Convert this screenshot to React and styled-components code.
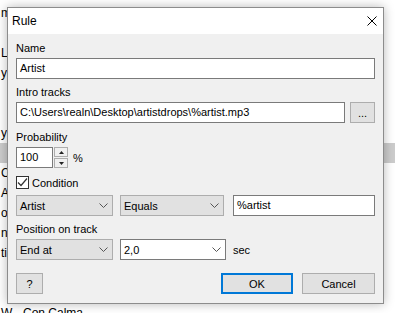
import React from 'react';
import styled, { createGlobalStyle } from 'styled-components';

const GlobalStyle = createGlobalStyle`
  body {
    margin: 0;
    background: #ffffff;
    font-family: "Liberation Sans", Arial, sans-serif;
    font-size: 11px;
    color: #000;
  }
`;

const Screen = styled.div`
  position: relative;
  width: 395px;
  height: 313px;
  overflow: hidden;
  background: #fff;
`;

const List = styled.div`
  display: flex;
  flex-direction: column;
  padding-top: 3px;
`;

const ListRow = styled.div`
  height: 20px;
  line-height: 20px;
  flex: none;
  white-space: nowrap;
  padding-left: 1px;
  font-size: 12px;
  background: ${(p) => (p.selected ? '#cccccc' : 'transparent')};
`;

const Dialog = styled.div`
  position: absolute;
  left: 7px;
  top: 7px;
  width: 377px;
  height: 297px;
  box-sizing: border-box;
  border: 1px solid #8c8c8c;
  background: #f0f0f0;
  box-shadow: 0 0 10px rgba(0, 0, 0, 0.28);
  display: flex;
  flex-direction: column;
`;

const TitleBar = styled.div`
  height: 26px;
  flex: none;
  background: #fff;
  display: flex;
  align-items: center;
  justify-content: space-between;
  padding: 0 6px 0 4px;
`;

const Title = styled.span`
  font-size: 12px;
`;

const Body = styled.div`
  flex: 1;
  display: flex;
  flex-direction: column;
  padding: 6px 8px 9px 8px;
`;

const Label = styled.div`
  height: 16px;
  line-height: 16px;
  margin-top: ${(p) => p.mt || 0}px;
  margin-bottom: 2px;
`;

const Row = styled.div`
  display: flex;
  align-items: center;
  gap: ${(p) => p.gap || 0}px;
  margin-top: ${(p) => p.mt || 0}px;
`;

const TextBox = styled.div`
  box-sizing: border-box;
  height: 21px;
  width: ${(p) => (p.w ? `${p.w}px` : 'auto')};
  flex: ${(p) => (p.grow ? 1 : 'none')};
  margin-left: ${(p) => p.ml || 0}px;
  border: 1px solid #7a7a7a;
  background: #fff;
  padding: 0 3px;
  line-height: 19px;
  white-space: nowrap;
  overflow: hidden;
`;

const Combo = styled.div`
  box-sizing: border-box;
  height: 21px;
  width: ${(p) => p.w}px;
  flex: none;
  border: 1px solid ${(p) => (p.editable ? '#7a7a7a' : '#adadad')};
  background: ${(p) => (p.editable ? '#fff' : '#e1e1e1')};
  display: flex;
  align-items: center;
  justify-content: space-between;
  padding: 0 4px 0 3px;
`;

const Button = styled.div`
  box-sizing: border-box;
  height: 21px;
  width: ${(p) => p.w}px;
  flex: none;
  border: ${(p) => (p.primary ? '2px solid #0078d7' : '1px solid #adadad')};
  background: #e1e1e1;
  display: flex;
  align-items: center;
  justify-content: center;
`;

const Spin = styled.div`
  display: flex;
  flex-direction: column;
  gap: 1px;
  margin-left: 1px;
`;

const SpinButton = styled.div`
  box-sizing: border-box;
  width: 14px;
  height: 10px;
  border: 1px solid #adadad;
  background: #f0f0f0;
  display: flex;
  align-items: center;
  justify-content: center;
`;

const Unit = styled.span`
  margin-left: ${(p) => p.ml || 0}px;
`;

const Check = styled.div`
  box-sizing: border-box;
  width: 13px;
  height: 13px;
  border: 1px solid #333;
  background: #fff;
  display: flex;
  align-items: center;
  justify-content: center;
`;

const Footer = styled.div`
  margin-top: auto;
  display: flex;
  align-items: center;
  gap: 9px;
`;

const Spacer = styled.div`
  flex: 1;
`;

const Chevron = () => (
  <svg width="9" height="5" viewBox="0 0 9 5">
    <polyline points="0.5,0.5 4.5,4.5 8.5,0.5" fill="none" stroke="#555" strokeWidth="1" />
  </svg>
);

const Arrow = ({ up }) => (
  <svg width="5" height="3" viewBox="0 0 5 3">
    <polygon points={up ? '2.5,0 5,3 0,3' : '0,0 5,0 2.5,3'} fill="#222" />
  </svg>
);

const CloseIcon = () => (
  <svg width="10" height="10" viewBox="0 0 10 10">
    <path d="M0.5 0.5 L9.5 9.5 M9.5 0.5 L0.5 9.5" stroke="#000" strokeWidth="1" />
  </svg>
);

const CheckMark = () => (
  <svg width="11" height="11" viewBox="0 0 11 11">
    <polyline points="1,5.5 4,8.5 10,1.5" fill="none" stroke="#333" strokeWidth="1.2" />
  </svg>
);

const rows = ['m', '', 'Lo', 'y', '', '', 'yl', '', 'Cy', 'Ali', 'oa', 'nd', 'ti', '', '', 'W - Con Calma'];

function App() {
  return (
    <Screen>
      <GlobalStyle />
      <List>
        {rows.map((r, i) => (
          <ListRow key={i} selected={i === 7}>{r}</ListRow>
        ))}
      </List>

      <Dialog>
        <TitleBar>
          <Title>Rule</Title>
          <CloseIcon />
        </TitleBar>
        <Body>
          <Label>Name</Label>
          <TextBox>Artist</TextBox>

          <Label mt={5}>Intro tracks</Label>
          <Row gap={5}>
            <TextBox grow>C:\Users\realn\Desktop\artistdrops\%artist.mp3</TextBox>
            <Button w={25}>...</Button>
          </Row>

          <Label mt={6}>Probability</Label>
          <Row>
            <TextBox w={37}>100</TextBox>
            <Spin>
              <SpinButton><Arrow up /></SpinButton>
              <SpinButton><Arrow /></SpinButton>
            </Spin>
            <Unit ml={5}>%</Unit>
          </Row>

          <Row mt={8} gap={3}>
            <Check><CheckMark /></Check>
            <span>Condition</span>
          </Row>

          <Row mt={6} gap={7}>
            <Combo w={97}><span>Artist</span><Chevron /></Combo>
            <Combo w={104}><span>Equals</span><Chevron /></Combo>
            <TextBox grow ml={2}>%artist</TextBox>
          </Row>

          <Label mt={5}>Position on track</Label>
          <Row gap={7}>
            <Combo w={97}><span>End at</span><Chevron /></Combo>
            <Combo w={106} editable><span>2,0</span><Chevron /></Combo>
            <Unit>sec</Unit>
          </Row>

          <Footer>
            <Button w={27}>?</Button>
            <Spacer />
            <Button w={72} primary>OK</Button>
            <Button w={73}>Cancel</Button>
          </Footer>
        </Body>
      </Dialog>
    </Screen>
  );
}

export default App;
